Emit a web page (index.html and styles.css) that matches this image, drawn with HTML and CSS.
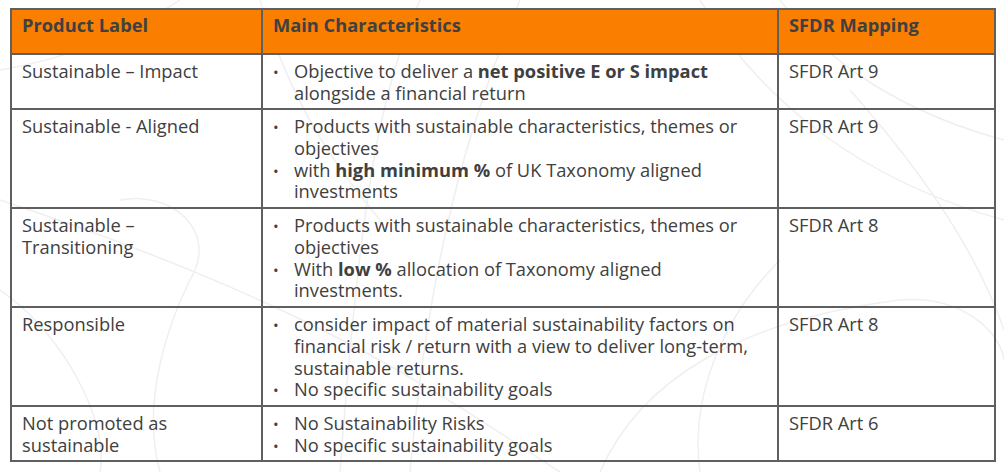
FILE: index.html
```html
<!DOCTYPE html>
<html>
<head>
<meta charset="utf-8">
<link rel="stylesheet" href="styles.css">
</head>
<body>
<div class="page">
  <svg class="bg" width="1004" height="472" viewBox="0 0 1004 472" fill="none" stroke="#efefef" stroke-width="1.5">
    <path d="M180 0 C 120 40, 60 60, 0 70"/>
    <path d="M420 0 C 380 90, 360 200, 340 472"/>
    <path d="M520 0 C 470 120, 430 250, 410 472"/>
    <path d="M560 472 C 420 380, 300 300, 0 200"/>
    <path d="M700 0 C 760 100, 860 180, 1004 220"/>
    <path d="M780 0 C 840 80, 930 120, 1004 140"/>
    <path d="M850 90 C 930 180, 980 260, 1004 330"/>
    <path d="M600 472 C 640 380, 740 320, 900 300 C 960 295, 1000 330, 1004 360"/>
    <path d="M160 472 C 140 400, 170 320, 190 280 C 220 230, 170 190, 120 200"/>
    <path d="M0 290 C 60 330, 110 420, 100 472"/>
    <path d="M260 0 C 290 100, 330 160, 380 220"/>
    <path d="M700 472 C 690 400, 720 320, 780 260"/>
  </svg>
  <table class="tbl">
    <colgroup>
      <col class="c1"><col class="c2"><col class="c3">
    </colgroup>
    <thead>
      <tr>
        <th>Product Label</th>
        <th>Main Characteristics</th>
        <th>SFDR Mapping</th>
      </tr>
    </thead>
    <tbody>
      <tr class="r1">
        <td>Sustainable – Impact</td>
        <td><ul><li>Objective to deliver a <b>net positive E or S impact</b> alongside a financial return</li></ul></td>
        <td>SFDR Art 9</td>
      </tr>
      <tr class="r2">
        <td>Sustainable - Aligned</td>
        <td><ul><li>Products with sustainable characteristics, themes or objectives</li><li>with <b>high minimum %</b> of UK Taxonomy aligned investments</li></ul></td>
        <td>SFDR Art 9</td>
      </tr>
      <tr class="r3">
        <td>Sustainable –<br>Transitioning</td>
        <td><ul><li>Products with sustainable characteristics, themes or objectives</li><li>With <b>low %</b> allocation of Taxonomy aligned investments.</li></ul></td>
        <td>SFDR Art 8</td>
      </tr>
      <tr class="r4">
        <td>Responsible</td>
        <td><ul><li>consider impact of material sustainability factors on financial risk / return with a view to deliver long-term, sustainable returns.</li><li>No specific sustainability goals</li></ul></td>
        <td>SFDR Art 8</td>
      </tr>
      <tr class="r5">
        <td>Not promoted as<br>sustainable</td>
        <td><ul><li>No Sustainability Risks</li><li>No specific sustainability goals</li></ul></td>
        <td>SFDR Art 6</td>
      </tr>
    </tbody>
  </table>
</div>
</body>
</html>
```
FILE: styles.css
```css
html, body {
  margin: 0;
  padding: 0;
  background: #ffffff;
}
.page {
  position: relative;
  width: 1004px;
  height: 472px;
  overflow: hidden;
  padding: 8px 0 0 10px;
  box-sizing: border-box;
  font-family: "Open Sans", "Liberation Sans", sans-serif;
  color: #404040;
}
.bg {
  position: absolute;
  left: 0;
  top: 0;
  z-index: 0;
}
.tbl {
  position: relative;
  z-index: 1;
  border-collapse: collapse;
  table-layout: fixed;
  width: 984px;
  font-size: 18.3px;
  line-height: 21.75px;
}
.c1 { width: 251px; }
.c2 { width: 516px; }
.c3 { width: 217px; }
.tbl th, .tbl td {
  border: 2px solid #5f5f5f;
  vertical-align: top;
  text-align: left;
  padding: 5px 10px 0 10px;
}
.tbl th {
  background: #fa7f00;
  font-weight: 700;
  color: #404040;
  height: 39px;
  padding-top: 4px;
}
.tbl td {
  background: transparent;
}
.tbl ul {
  margin: 0;
  padding: 0;
  list-style: none;
}
.tbl li {
  position: relative;
  padding-left: 21px;
}
.tbl li::before {
  content: "•";
  position: absolute;
  left: 0;
  top: 2px;
  font-size: 15px;
}
.tbl b { font-weight: 700; }
.r1 td { height: 48px; }
.r2 td { height: 92px; }
.r3 td { height: 92px; }
.r4 td { height: 92px; }
.r5 td { height: 48px; }
```
